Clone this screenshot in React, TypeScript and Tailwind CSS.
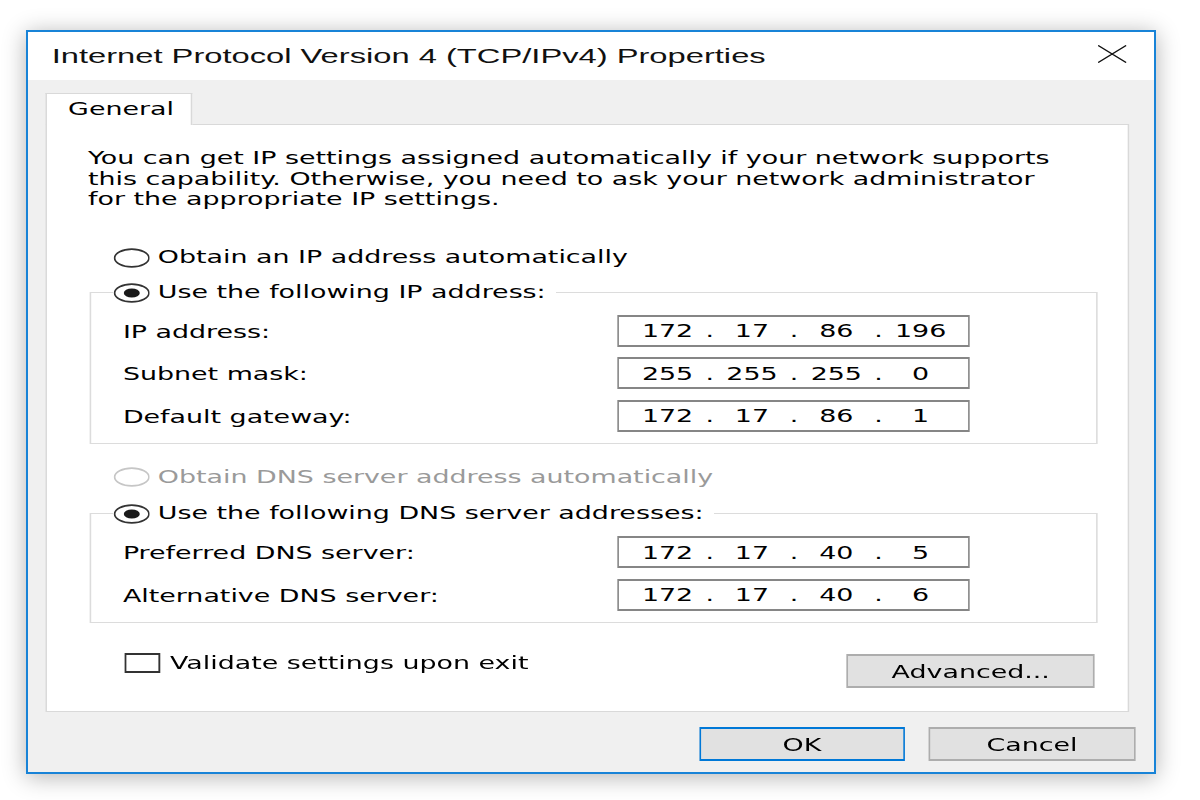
import React from 'react';

// Classic Win32 property dialog, drawn at 1.58x horizontal stretch.
// Inner widths are in unstretched px; SVG viewBoxes use final px with preserveAspectRatio="none".

const Radio: React.FC<{ checked?: boolean; disabled?: boolean }> = ({ checked, disabled }) => (
  <svg width="23.4" height="20" viewBox="0 0 37 20" preserveAspectRatio="none" className="shrink-0">
    <ellipse
      cx="18.5"
      cy="10"
      rx="17.2"
      ry="8.9"
      fill="#fff"
      stroke={disabled ? '#c6c6c6' : '#333'}
      strokeWidth="1.7"
    />
    {checked && <ellipse cx="18.5" cy="10" rx="8" ry="4.6" fill="#1a1a1a" />}
  </svg>
);

const Checkbox: React.FC = () => (
  <svg width="22.8" height="20" viewBox="0 0 36 20" preserveAspectRatio="none" className="shrink-0">
    <rect x="1" y="1" width="34" height="18" fill="#fff" stroke="#333" strokeWidth="2" />
  </svg>
);

const IpField: React.FC<{ parts: string[] }> = ({ parts }) => (
  <div className="flex h-[32px] w-[223.4px] shrink-0 items-center border-x-[1.3px] border-y-2 border-[#868686] bg-white pl-[8.5px] pt-[2px] leading-[21px]">
    {parts.map((p, i) => (
      <React.Fragment key={i}>
        {i > 0 && <span className="w-[8.4px] text-center">.</span>}
        <span className="w-[45px] text-center">{p}</span>
      </React.Fragment>
    ))}
  </div>
);

interface Row {
  label: string;
  parts: string[];
}

const GroupBox: React.FC<{ title: string; rows: Row[]; className?: string }> = ({ title, rows, className }) => (
  <fieldset className={`w-[638px] border border-[#dcdcdc] pl-[14.2px] ${className ?? ''}`}>
    <legend>
      <div className="flex h-[21px] items-center gap-[5px] pr-[6px]">
        <Radio checked />
        <span>{title}</span>
      </div>
    </legend>
    <div className="flex flex-col gap-[10.5px] pb-[11px] pl-[6.3px] pr-[79.4px] pt-[11.8px]">
      {rows.map((r) => (
        <div key={r.label} className="flex h-[32px] items-center justify-between">
          <span className="pt-[3px]">{r.label}</span>
          <IpField parts={r.parts} />
        </div>
      ))}
    </div>
  </fieldset>
);

const Button: React.FC<{ label: string; primary?: boolean; className?: string }> = ({ label, primary, className }) => (
  <div
    className={`flex h-[34px] w-[130.4px] items-center justify-center bg-[#e1e1e1] pt-[3px] ${
      primary ? 'border-x-[1.6px] border-y-[2.5px] border-[#0078d7]' : 'border-x-[1.3px] border-y-2 border-[#adadad]'
    } ${className ?? ''}`}
  >
    {label}
  </div>
);

export default function App() {
  return (
    <div className="h-[800px] w-[1200px] overflow-hidden bg-white pl-[26px] pt-[30px]">
      <div className="h-[744px] w-[1130px] overflow-hidden border-2 border-[#1883d7] bg-[#f0f0f0] shadow-[0_3px_22px_rgba(0,0,0,0.3)]">
        <div className="flex h-full w-[712.66px] origin-top-left scale-x-[1.58] flex-col font-['DejaVu_Sans',sans-serif] text-[17px] leading-[21px] text-black">
          {/* title bar */}
          <div className="flex h-[48px] shrink-0 items-center bg-white pl-[15px]">
            <span className="font-['Liberation_Sans',Arial,sans-serif] text-[20.7px] leading-[24px] text-[#111]">
              Internet Protocol Version 4 (TCP/IPv4) Properties
            </span>
            <svg
              width="18.35"
              height="18"
              viewBox="0 0 29 18"
              preserveAspectRatio="none"
              className="mb-[4px] ml-auto mr-[17px]"
            >
              <path d="M0.5 0.5 L28.5 17.5 M28.5 0.5 L0.5 17.5" stroke="#111" strokeWidth="1.4" />
            </svg>
          </div>

          {/* body */}
          <div className="flex flex-1 flex-col pt-[12.5px]">
            <div className="relative z-10 -mb-px ml-[11.4px] flex h-[32.5px] w-[93px] items-center border border-b-0 border-[#d9d9d9] bg-white pl-[13px]">
              General
            </div>
            <div className="ml-[11.4px] mr-[15.2px] flex h-[588px] flex-col border border-[#d9d9d9] bg-white">
              <p className="pl-[25.6px] pt-[23.2px] leading-[20.5px]">
                You can get IP settings assigned automatically if your network supports
                <br />
                this capability. Otherwise, you need to ask your network administrator
                <br />
                for the appropriate IP settings.
              </p>

              <div className="ml-[41.4px] mt-[37.6px] flex h-[21px] items-center gap-[5px]">
                <Radio />
                <span>Obtain an IP address automatically</span>
              </div>

              <GroupBox
                className="ml-[26.2px] mt-[13.9px]"
                title="Use the following IP address:"
                rows={[
                  { label: 'IP address:', parts: ['172', '17', '86', '196'] },
                  { label: 'Subnet mask:', parts: ['255', '255', '255', '0'] },
                  { label: 'Default gateway:', parts: ['172', '17', '86', '1'] },
                ]}
              />

              <div className="ml-[41.4px] mt-[22.8px] flex h-[21px] items-center gap-[5px] text-[#9a9a9a]">
                <Radio disabled />
                <span>Obtain DNS server address automatically</span>
              </div>

              <GroupBox
                className="ml-[26.2px] mt-[15.7px]"
                title="Use the following DNS server addresses:"
                rows={[
                  { label: 'Preferred DNS server:', parts: ['172', '17', '40', '5'] },
                  { label: 'Alternative DNS server:', parts: ['172', '17', '40', '6'] },
                ]}
              />

              <div className="mt-[30px] flex items-start">
                <div className="ml-[49px] flex h-[21px] items-center gap-[5.7px]">
                  <Checkbox />
                  <span>Validate settings upon exit</span>
                </div>
                <Button label="Advanced..." className="ml-auto mr-[21px] mt-px w-[157.6px]" />
              </div>
            </div>

            <div className="mr-[12px] mt-[15px] flex justify-end gap-[15.2px]">
              <Button label="OK" primary />
              <Button label="Cancel" />
            </div>
          </div>
        </div>
      </div>
    </div>
  );
}
